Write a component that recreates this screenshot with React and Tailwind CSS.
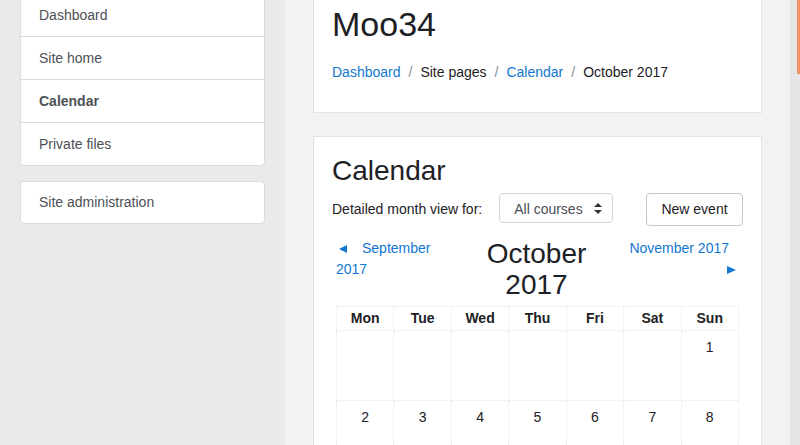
import React from "react";

const navItems = [
    { label: "Dashboard" },
    { label: "Site home" },
    { label: "Calendar", active: true },
    { label: "Private files" },
];

const days = ["Mon", "Tue", "Wed", "Thu", "Fri", "Sat", "Sun"];
const weeks = [
    ["", "", "", "", "", "", "1"],
    ["2", "3", "4", "5", "6", "7", "8"],
];

const TriangleLeft = () => (
    <svg width="8" height="8" viewBox="0 0 8 8" className="inline-block">
        <path d="M0 4 L8 0 L8 8 Z" fill="#1177d1" />
    </svg>
);

const TriangleRight = () => (
    <svg width="9" height="8" viewBox="0 0 9 8" className="inline-block">
        <path d="M9 4 L0 0 L0 8 Z" fill="#1177d1" />
    </svg>
);

const Sidebar = () => (
    <div className="w-[285px] shrink-0 bg-[#e9eaec] pl-5 pr-[20px] text-[14px] text-[#4d5156]">
        {/* Main navigation block */}
        <div className="mt-[-7px] bg-white border border-[#dcdcdc] rounded">
            {navItems.map((item, i) => (
                <div
                    key={item.label}
                    className={`flex items-center pl-[18px] ${i > 0 ? "h-[43px] border-t border-[#dcdcdc]" : "h-[42px]"} ${item.active ? "font-bold" : ""}`}
                >
                    {item.label}
                </div>
            ))}
        </div>

        {/* Site administration */}
        <div className="mt-[15px] bg-white border border-[#dcdcdc] rounded">
            <div className="h-[41px] flex items-center pl-[18px]">Site administration</div>
        </div>
    </div>
);

const Header = () => (
    <div className="mt-[-20px] bg-white border border-[#e3e3e3] px-[18px] pt-[20px] pb-[30px]">
        <h1 className="text-[34px] leading-[42px] text-[#1d2125] mt-[2px]">Moo34</h1>
        <div className="mt-[17px] flex items-center text-[14px] leading-[20px]">
            <span className="text-[#1177d1]">Dashboard</span>
            <span className="px-2 text-[#868e96]">/</span>
            <span className="text-[#1d2125]">Site pages</span>
            <span className="px-2 text-[#868e96]">/</span>
            <span className="text-[#1177d1]">Calendar</span>
            <span className="px-2 text-[#868e96]">/</span>
            <span className="text-[#1d2125]">October 2017</span>
        </div>
    </div>
);

const CalendarCard = () => (
    <div className="mt-[23px] bg-white border border-[#e3e3e3] px-[18px] pt-[17px] pb-6">
        <h2 className="text-[28px] leading-[34px] text-[#1d2125]">Calendar</h2>

        <div className="mt-[5px] flex items-start">
            <span className="mt-[6px] text-[14px] leading-[20px] text-[#1d2125]">Detailed month view for:</span>
            <div className="ml-[17px] w-[114px] h-[30px] border border-[#ced4da] rounded flex items-center pl-[14px] pr-[10px] pt-[3px] text-[14px] text-[#495057]">
                <span className="flex-1">All courses</span>
                <svg width="8" height="11" viewBox="0 0 8 11" className="-mt-[2px]">
                    <path d="M4 0 L8 4 L0 4 Z M0 7 L8 7 L4 11 Z" fill="#333" />
                </svg>
            </div>
            <button className="ml-auto w-[97px] h-[33px] border border-[#c8c8c8] rounded bg-white text-[14px] text-[#1d2125]">
                New event
            </button>
        </div>

        <div className="px-1">
            {/* Month navigation */}
            <div className="mt-[12px] flex items-start text-[14px] leading-[21px] text-[#1177d1]">
                <div className="w-[110px]">
                    <div className="flex items-center">
                        <span className="ml-[3px]"><TriangleLeft /></span>
                        <span className="ml-[15px]">September</span>
                    </div>
                    <div>2017</div>
                </div>
                <div className="flex-1 text-center text-[28px] leading-[31px] text-[#1d2125]">
                    <div>October</div>
                    <div>2017</div>
                </div>
                <div className="w-[112px] flex flex-col items-end">
                    <div className="pr-[10px]">November 2017</div>
                    <div className="pr-[3px] flex items-center h-[21px]"><TriangleRight /></div>
                </div>
            </div>

            {/* Month grid */}
            <table className="mt-[6px] w-full table-fixed border-collapse text-[14px] text-[#1d2125]">
                <thead>
                    <tr>
                        {days.map((d) => (
                            <th key={d} className="h-[24px] border border-dotted border-[#e6e6e6] font-bold text-center">
                                {d}
                            </th>
                        ))}
                    </tr>
                </thead>
                <tbody>
                    {weeks.map((week, wi) => (
                        <tr key={wi}>
                            {week.map((day, di) => (
                                <td key={di} className="h-[70px] align-top border border-dotted border-[#e6e6e6] text-center pt-[6px]">
                                    {day}
                                </td>
                            ))}
                        </tr>
                    ))}
                </tbody>
            </table>
        </div>
    </div>
);

export default function App() {
    return (
        <div className="flex h-[445px] w-[800px] overflow-hidden" style={{ fontFamily: '"Liberation Sans", Arial, sans-serif' }}>
            <Sidebar />
            <div className="flex-1 bg-[#f2f2f2] px-[28px]">
                <Header />
                <CalendarCard />
            </div>
            {/* right edge strip */}
            <div className="w-[10px] shrink-0 bg-[#e6e6e6] flex justify-end">
                <div className="w-[3px] h-[74px] bg-[#f0916a]" />
            </div>
        </div>
    );
}
